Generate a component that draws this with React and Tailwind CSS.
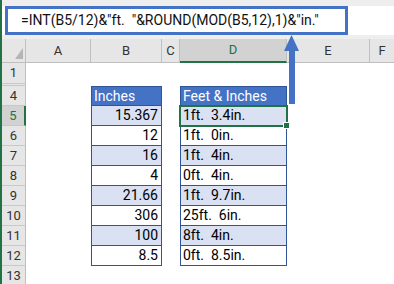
import React from "react";

const rows = [
  { n: 5, b: "15.367", d: "1ft.  3.4in.", fill: true },
  { n: 6, b: "12", d: "1ft.  0in.", fill: false },
  { n: 7, b: "16", d: "1ft.  4in.", fill: true },
  { n: 8, b: "4", d: "0ft.  4in.", fill: false },
  { n: 9, b: "21.66", d: "1ft.  9.7in.", fill: true },
  { n: 10, b: "306", d: "25ft.  6in.", fill: false },
  { n: 11, b: "100", d: "8ft.  4in.", fill: true },
  { n: 12, b: "8.5", d: "0ft.  8.5in.", fill: false },
];

function RowHead({ n, selected, h }) {
  return (
    <div
      className={
        "flex items-center justify-center text-[13px] border-b border-[#c8c8c8] " +
        (selected
          ? "w-[24px] bg-[#d2d2d2] border-r-2 border-r-[#217346] text-[#217346]"
          : "w-[24px] bg-[#e6e6e6] border-r border-r-[#bfbfbf] text-[#333]")
      }
      style={{ height: h }}
    >
      {n}
    </div>
  );
}

export default function App() {
  return (
    <div
      className="relative w-[394px] h-[284px] overflow-hidden bg-white border-l-2 border-[#217346] text-black"
      style={{ fontFamily: "Roboto, 'Liberation Sans', sans-serif" }}
    >
      {/* formula bar */}
      <div className="h-[39px] bg-[#eeeeee] pt-[6px]">
        <div className="h-[29px] bg-white flex">
          <div className="ml-[3px] w-[343px] h-[29px] border-[3px] border-[#4472C4] flex items-center pl-[13px] text-[14px] whitespace-pre text-[#111]">
            {'=INT(B5/12)&"ft.  "&ROUND(MOD(B5,12),1)&"in."'}
          </div>
        </div>
      </div>

      {/* column headers */}
      <div className="flex h-[24px] bg-[#e6e6e6] border-b border-[#bfbfbf] text-[13px] text-[#333]">
        <div className="w-[24px] border-r border-[#bfbfbf] flex items-end justify-end pr-[2px] pb-[3px]">
          <svg width="8" height="11" viewBox="0 0 8 11">
            <polygon points="8,0 8,11 0,11" fill="#b5b5b5" />
          </svg>
        </div>
        <div className="w-[65px] border-r border-[#bfbfbf] flex items-center justify-center">A</div>
        <div className="w-[71px] border-r border-[#bfbfbf] flex items-center justify-center">B</div>
        <div className="w-[18px] border-r border-[#bfbfbf] flex items-center justify-center">C</div>
        <div className="w-[107px] border-r border-[#bfbfbf] bg-[#d2d2d2] border-b-2 border-b-[#217346] -mb-px flex items-center justify-center text-[#217346]">D</div>
        <div className="w-[83px] border-r border-[#bfbfbf] flex items-center justify-center">E</div>
        <div className="flex-1 flex items-center justify-center">F</div>
      </div>

      {/* row 1 */}
      <div className="flex">
        <RowHead n={1} h={21} />
        <div className="flex-1" />
      </div>
      {/* hidden rows 2-3 */}
      <div className="flex">
        <div className="w-[24px] h-[2px] bg-[#e6e6e6] border-r border-[#bfbfbf] border-b border-b-[#c8c8c8]" />
        <div className="flex-1" />
      </div>

      {/* row 4 header */}
      <div className="flex h-[20px]">
        <RowHead n={4} h={20} />
        <div className="w-[65px]" />
        <div className="w-[71px] bg-[#4472C4] border border-[#2F5597] text-white text-[14px] flex items-center pl-[2px]">
          Inches
        </div>
        <div className="w-[18px]" />
        <div className="w-[107px] bg-[#4472C4] border border-[#2F5597] text-white text-[14px] flex items-center pl-[2px] whitespace-pre">
          Feet &amp; Inches
        </div>
        <div className="flex-1" />
      </div>

      {rows.map((r) => (
        <div key={r.n} className="flex h-[20px]">
          <RowHead n={r.n} h={20} selected={r.n === 5} />
          <div className="w-[65px]" />
          <div
            className={
              "w-[71px] border-x border-b border-[#2F5597] text-[14px] flex items-center justify-end pr-[3px] " +
              (r.fill ? "bg-[#D9E1F2]" : "bg-white")
            }
          >
            {r.b}
          </div>
          <div className="w-[18px]" />
          <div
            className={
              "w-[107px] border-x border-b border-[#2F5597] text-[14px] flex items-center pl-[2px] whitespace-pre " +
              (r.fill ? "bg-[#D9E1F2]" : "bg-white")
            }
          >
            {r.d}
          </div>
          <div className="flex-1" />
        </div>
      ))}

      {/* row 13 */}
      <div className="flex">
        <RowHead n={13} h={20} />
        <div className="flex-1" />
      </div>

      {/* selection of D5 */}
      <div className="absolute left-[177px] top-[105px] w-[109px] h-[22px] border-2 border-[#217346]" />
      <div className="absolute left-[281px] top-[122px] w-[7px] h-[7px] bg-[#217346] border border-white" />

      {/* arrow */}
      <svg className="absolute left-0 top-0" width="394" height="284" viewBox="0 0 394 284">
        <polygon points="289.5,35 297,51 282,51" fill="#4472C4" />
        <rect x="287" y="50" width="6" height="54" fill="#4472C4" />
      </svg>
    </div>
  );
}
